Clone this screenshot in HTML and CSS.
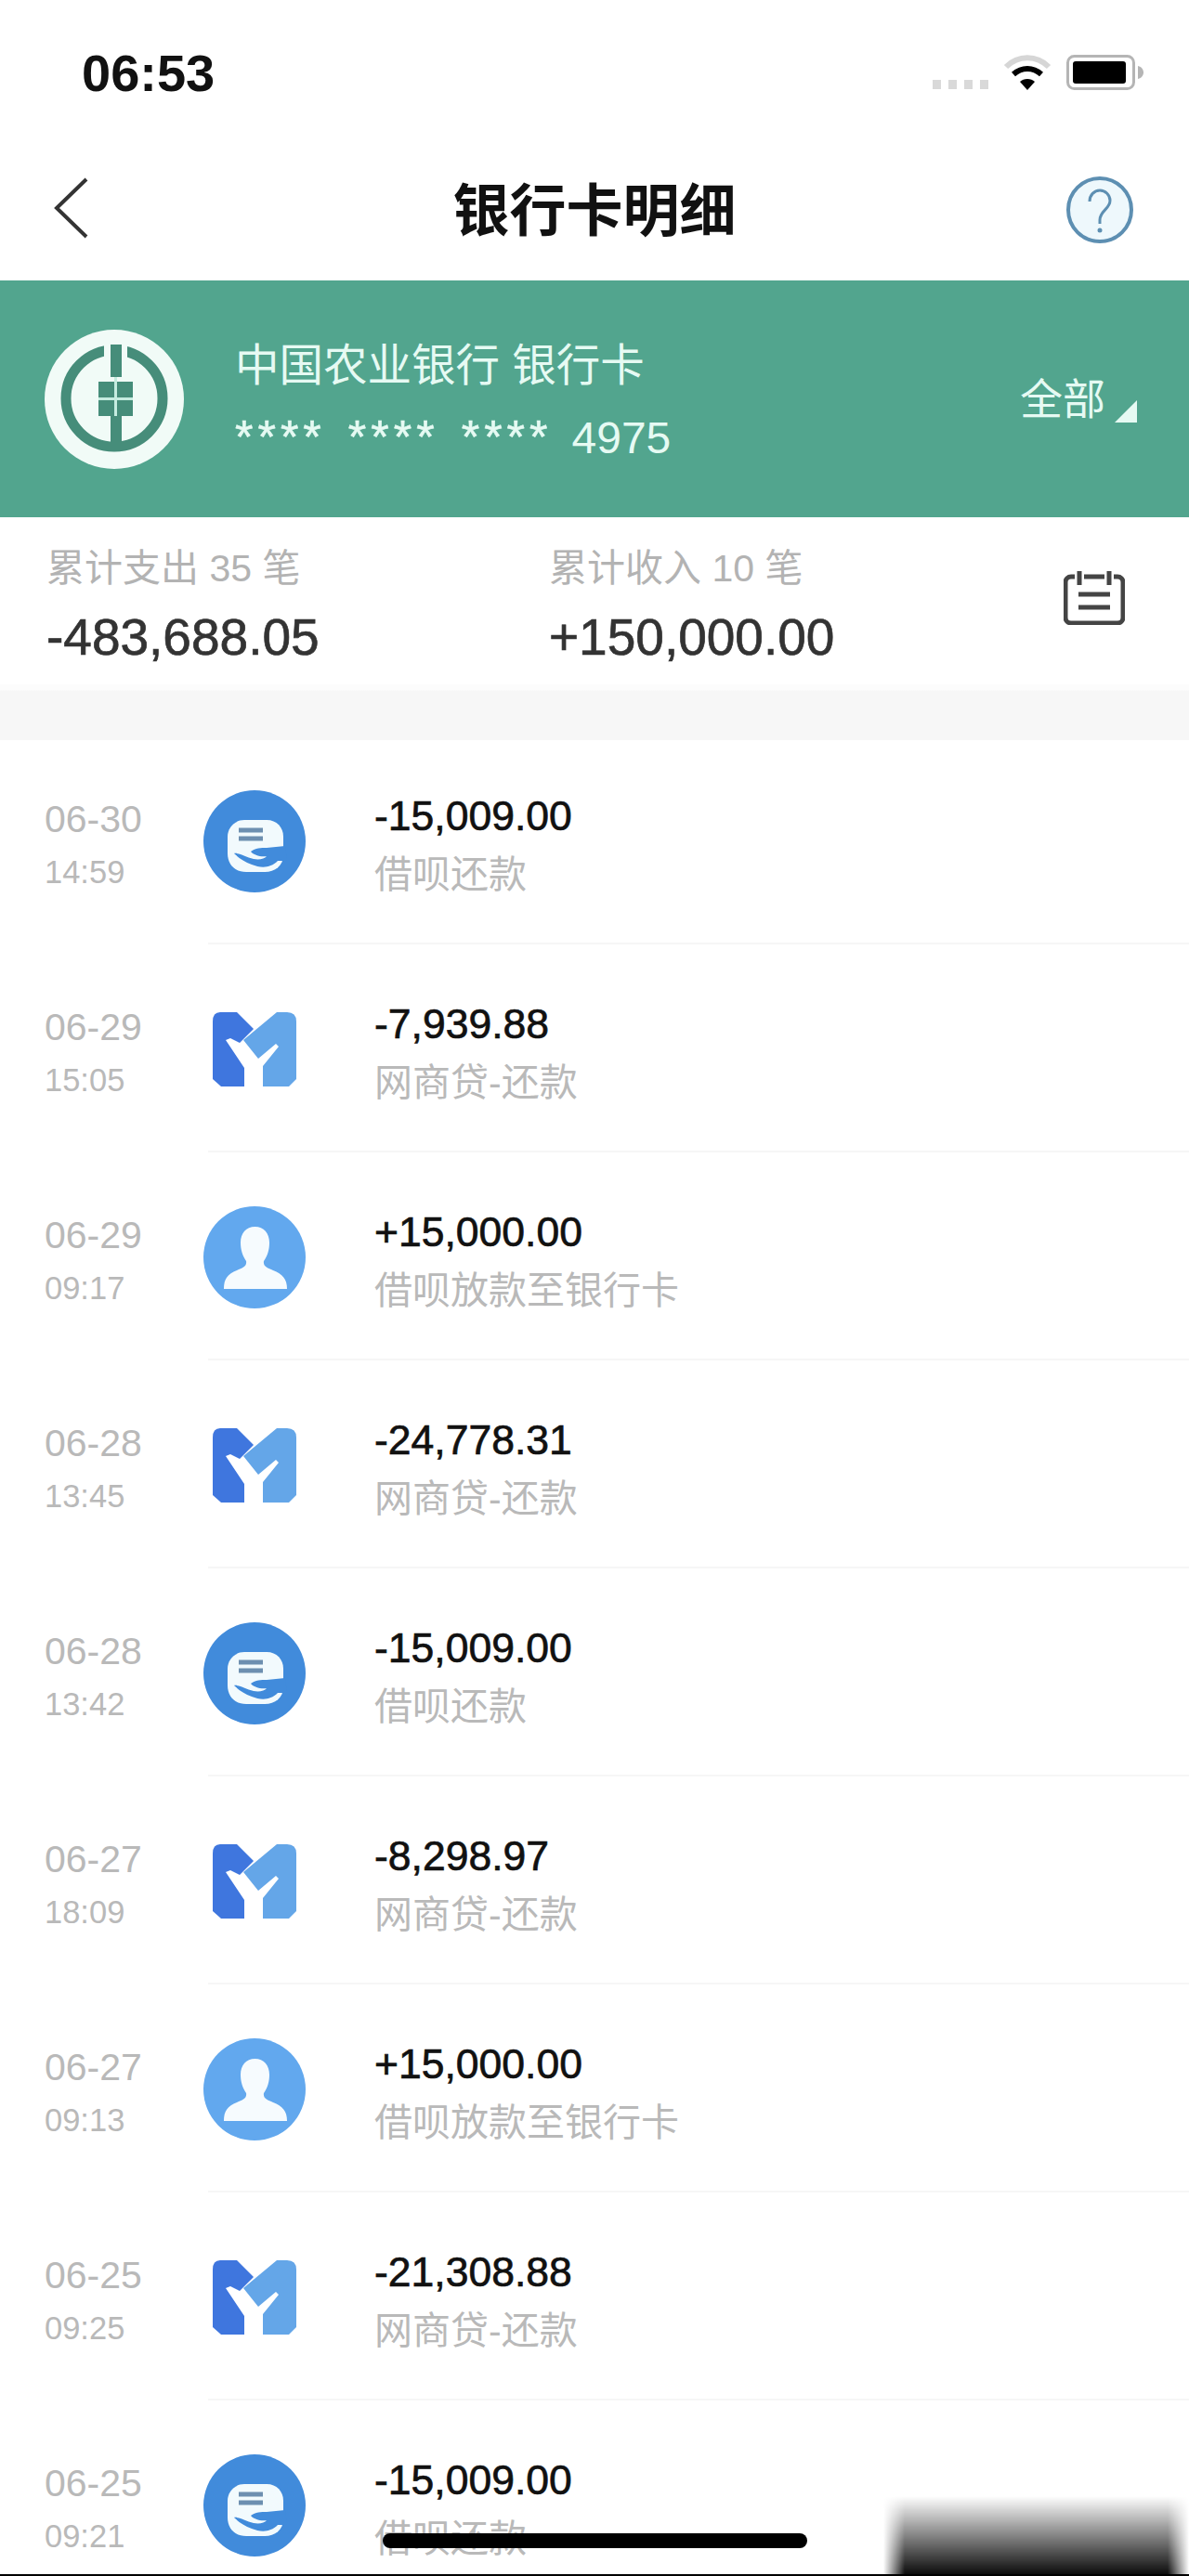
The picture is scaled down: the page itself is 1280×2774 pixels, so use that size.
FILE: index.html
```html
<!DOCTYPE html>
<html lang="zh-CN">
<head>
    <meta charset="UTF-8">
    <meta name="viewport" content="width=device-width, initial-scale=1.0">
    <title>银行卡明细</title>
    <link rel="stylesheet" href="styles.css">
</head>
<body>
    <svg class="icon-defs" width="0" height="0">
        <defs>
            <symbol id="icon-jiebei" viewBox="0 0 110 110">
                <circle cx="55" cy="55" r="55" fill="#418bdb"/>
                <path d="M44 32H68C79 32 86 40 86 50V70C86 81 77 88 66 88H46C34 88 26 80 26 68V50C26 40 34 32 44 32Z" fill="#f2fafd"/>
                <path d="M38 43h26M38 52h26" stroke="#6d8fb0" stroke-width="5" fill="none"/>
                <path d="M51 66C56 62 62 62 68 62L88 60 90 76 80 76C72 84 62 84 52 80 44 77 38 73 33 68 38 67 46 72 54 74 60 75 66 74 68 71 62 72 54 70 51 66Z" fill="#418bdb"/>
            </symbol>
            <symbol id="icon-mybank" viewBox="0 0 90 80">
                <path d="M0 10Q0 0 8 0H26L44 18 29 33 19 28 14 30 34 60V80H9L0 72Z" fill="#3f76de"/>
                <path d="M33 30 69 0H80Q90 0 90 10V72L82 80H54V58L71 37 68 34 49 50Z" fill="#64a6e8"/>
            </symbol>
            <symbol id="icon-person" viewBox="0 0 110 110">
                <circle cx="55" cy="55" r="55" fill="#62a8ee"/>
                <path d="M22 89C22 78 26 73 36 69 42 66 47 65 46 59 42 53 40 47 40 39 40 29 46 22 55.500 22 65 22 71 29 71 39 71 47 69 53 65 59 64 65 69 66 75 69 85 73 90 78 90 89Z" fill="#f6fbfe"/>
            </symbol>
        </defs>
    </svg>

    <div class="status-bar">
        <span class="clock">06:53</span>
        <div class="status-icons">
            <svg class="signal" width="60" height="10" viewBox="0 0 60 10"><path d="M0 0h9v10H0zM17 0h9v10h-9zM34 0h9v10h-9zM51 0h9v10h-9z" fill="#d9d9d9"/></svg>
            <svg class="wifi" width="52" height="38" viewBox="0 0 52 38">
                <path d="M3 13C16 0 36 0 49 13" fill="none" stroke="#d6d6d6" stroke-width="6"/>
                <path d="M11 21c9-8 21-8 30 0" fill="none" stroke="#000" stroke-width="6"/>
                <path d="M26 38 18 29c4-4 12-4 16 0z" fill="#000"/>
            </svg>
            <svg class="battery" width="84" height="38" viewBox="0 0 84 38">
                <rect x="1.500" y="1.500" width="71" height="35" rx="7" fill="none" stroke="#b5b5b5" stroke-width="3"/>
                <rect x="7" y="7" width="57" height="24" rx="3" fill="#000"/>
                <path d="M77 12c4 1 6 4 6 7s-2 6-6 7z" fill="#b5b5b5"/>
            </svg>
        </div>
    </div>

    <header class="nav">
        <svg class="nav-back" width="38" height="66" viewBox="0 0 38 66"><path d="M35 2 3 33l32 31" fill="none" stroke="#333" stroke-width="4"/></svg>
        <h1>银行卡明细</h1>
        <svg class="nav-help" width="76" height="76" viewBox="0 0 76 76">
            <circle cx="38" cy="38" r="34" fill="#eef8fc" stroke="#5d8fb2" stroke-width="4"/>
            <path d="M27 29c0-7 5-12 11-12s11 5 11 11c0 9-11 11-11 21v4" fill="none" stroke="#5d8fb2" stroke-width="3"/>
            <circle cx="38" cy="60" r="2.500" fill="#5d8fb2"/>
        </svg>
    </header>

    <section class="card">
        <svg class="card-logo" width="150" height="150" viewBox="0 0 150 150">
            <circle cx="75" cy="75" r="75" fill="#f1fbf7"/>
            <circle cx="75" cy="74" r="52" fill="none" stroke="#468d7a" stroke-width="11"/>
            <path d="M64 14h25v42H64z" fill="#f1fbf7"/>
            <path d="M71 16h12v35H71z" fill="#468d7a"/>
            <path d="M58 56h37v37H83v30H71V93H58z" fill="#468d7a"/>
            <path d="M75 51h3v42h-3zM58 73h37v3H58z" fill="#c5ece0"/>
        </svg>
        <div class="card-info">
            <div class="card-name">中国农业银行 银行卡</div>
            <div class="card-number">
                <span class="stars">****</span>
                <span class="stars">****</span>
                <span class="stars">****</span>
                <span class="last-four">4975</span>
            </div>
        </div>
        <div class="card-filter">全部<span class="corner"></span></div>
    </section>

    <section class="totals">
        <div class="total">
            <div class="total-label">累计支出 35 笔</div>
            <div class="total-value">-483,688.05</div>
        </div>
        <div class="total">
            <div class="total-label">累计收入 10 笔</div>
            <div class="total-value">+150,000.00</div>
        </div>
        <svg class="total-icon" width="66" height="58" viewBox="0 0 66 58">
            <path d="M12 6H8a6 6 0 0 0-6 6v38a6 6 0 0 0 6 6h50a6 6 0 0 0 6-6V12a6 6 0 0 0-6-6h-4M22 6h22" fill="none" stroke="#444" stroke-width="5"/>
            <path d="M17 0v15M49 0v15M16 25h34M16 39h34" fill="none" stroke="#444" stroke-width="5"/>
        </svg>
    </section>

    <div class="gap"></div>

    <ul class="list">
        <li class="row">
            <div class="when"><span class="date">06-30</span><span class="time">14:59</span></div>
            <div class="row-body">
                <svg class="badge"><use href="#icon-jiebei"/></svg>
                <div class="what"><span class="amount">-15,009.00</span><span class="desc">借呗还款</span></div>
            </div>
        </li>
        <li class="row">
            <div class="when"><span class="date">06-29</span><span class="time">15:05</span></div>
            <div class="row-body">
                <svg class="badge badge-m"><use href="#icon-mybank"/></svg>
                <div class="what"><span class="amount">-7,939.88</span><span class="desc">网商贷-还款</span></div>
            </div>
        </li>
        <li class="row">
            <div class="when"><span class="date">06-29</span><span class="time">09:17</span></div>
            <div class="row-body">
                <svg class="badge"><use href="#icon-person"/></svg>
                <div class="what"><span class="amount">+15,000.00</span><span class="desc">借呗放款至银行卡</span></div>
            </div>
        </li>
        <li class="row">
            <div class="when"><span class="date">06-28</span><span class="time">13:45</span></div>
            <div class="row-body">
                <svg class="badge badge-m"><use href="#icon-mybank"/></svg>
                <div class="what"><span class="amount">-24,778.31</span><span class="desc">网商贷-还款</span></div>
            </div>
        </li>
        <li class="row">
            <div class="when"><span class="date">06-28</span><span class="time">13:42</span></div>
            <div class="row-body">
                <svg class="badge"><use href="#icon-jiebei"/></svg>
                <div class="what"><span class="amount">-15,009.00</span><span class="desc">借呗还款</span></div>
            </div>
        </li>
        <li class="row">
            <div class="when"><span class="date">06-27</span><span class="time">18:09</span></div>
            <div class="row-body">
                <svg class="badge badge-m"><use href="#icon-mybank"/></svg>
                <div class="what"><span class="amount">-8,298.97</span><span class="desc">网商贷-还款</span></div>
            </div>
        </li>
        <li class="row">
            <div class="when"><span class="date">06-27</span><span class="time">09:13</span></div>
            <div class="row-body">
                <svg class="badge"><use href="#icon-person"/></svg>
                <div class="what"><span class="amount">+15,000.00</span><span class="desc">借呗放款至银行卡</span></div>
            </div>
        </li>
        <li class="row">
            <div class="when"><span class="date">06-25</span><span class="time">09:25</span></div>
            <div class="row-body">
                <svg class="badge badge-m"><use href="#icon-mybank"/></svg>
                <div class="what"><span class="amount">-21,308.88</span><span class="desc">网商贷-还款</span></div>
            </div>
        </li>
        <li class="row">
            <div class="when"><span class="date">06-25</span><span class="time">09:21</span></div>
            <div class="row-body">
                <svg class="badge"><use href="#icon-jiebei"/></svg>
                <div class="what"><span class="amount">-15,009.00</span><span class="desc">借呗还款</span></div>
            </div>
        </li>
    </ul>

    <div class="home-bar"></div>
    <div class="corner-shade"></div>
    <div class="bottom-line"></div>
</body>
</html>
```

FILE: styles.css
```css
* {
    box-sizing: border-box;
}
html, body {
    height: 100%;
}
body {
    margin: 0;
    position: relative;
    height: 2774px;
    overflow: hidden;
    background: #fff;
    color: #000;
    font-family: "Liberation Sans", "Noto Sans CJK SC", sans-serif;
}
.icon-defs {
    position: absolute;
}

/* status bar */
.status-bar {
    height: 160px;
    display: flex;
    align-items: flex-start;
    justify-content: space-between;
    padding: 59px 48px 0 88px;
}
.clock {
    font-size: 56px;
    line-height: 40px;
    font-weight: 700;
    color: #111;
}
.status-icons {
    display: flex;
    align-items: flex-end;
    gap: 16px;
}
.signal {
    margin-bottom: 1px;
}

/* nav */
.nav {
    height: 142px;
    display: grid;
    grid-template-columns: 1fr auto 1fr;
    align-items: center;
    padding: 0 58px 10px 58px;
}
.nav-back {
    margin-top: -4px;
}
.nav-help {
    justify-self: end;
}
.nav h1 {
    margin: 3px 0 0;
    font-size: 61px;
    line-height: 70px;
    font-weight: 700;
    color: #111;
}

/* green card */
.card {
    height: 255px;
    background: #52a58e;
    display: flex;
    align-items: center;
    padding: 0 56px 0 48px;
    color: #e6faf3;
}
.card-logo {
    flex-shrink: 0;
}
.card-info {
    margin-left: 55px;
    margin-top: 4px;
    flex: 1;
}
.card-name {
    font-size: 47.500px;
    line-height: 56px;
}
.card-number {
    display: flex;
    align-items: baseline;
    gap: 24px;
    margin-top: 24px;
}
.stars {
    font-size: 50px;
    line-height: 50px;
    letter-spacing: 5px;
    -webkit-text-stroke: 0.6px #e6faf3;
}
.last-four {
    font-size: 48px;
    line-height: 50px;
    margin-left: -3px;
}
.card-filter {
    position: relative;
    font-size: 46px;
    line-height: 50px;
    padding-right: 34px;
}
.corner {
    position: absolute;
    right: 0;
    bottom: 0;
    width: 0;
    height: 0;
    border-left: 24px solid transparent;
    border-bottom: 24px solid #e6faf3;
}

/* totals */
.totals {
    height: 180px;
    display: flex;
    align-items: flex-start;
    padding: 29px 0 0 50px;
    color: #333;
}
.total {
    width: 541px;
}
.total-label {
    font-size: 41px;
    line-height: 52px;
    color: #b3b3b3;
}
.total-value {
    font-size: 55px;
    line-height: 62px;
    margin-top: 17px;
    -webkit-text-stroke: 0.7px #333;
}
.total-icon {
    margin-top: 29px;
    margin-left: 13px;
}
.gap {
    height: 60px;
    background: linear-gradient(to bottom, #fcfcfc 6px, #f7f7f7 7px);
}

/* list */
.list {
    list-style: none;
    margin: -4px 0 0;
    padding: 0;
}
.row {
    height: 224px;
    display: flex;
}
.when {
    width: 224px;
    padding: 61px 0 0 48px;
    display: flex;
    flex-direction: column;
    color: #b9b9b9;
}
.date {
    font-size: 41px;
    line-height: 56px;
}
.time {
    font-size: 34.500px;
    line-height: 44px;
    margin-top: 7px;
}
.row-body {
    flex: 1;
    display: flex;
    align-items: center;
    border-bottom: 2px solid #f6f6f6;
}
.badge {
    width: 110px;
    height: 110px;
    margin-left: -5px;
    margin-top: 4px;
    flex-shrink: 0;
}
.badge-m {
    width: 90px;
    height: 80px;
    margin: 4px 10px 0 5px;
}
.what {
    display: flex;
    flex-direction: column;
    margin-left: 74px;
    margin-top: 12px;
}
.amount {
    font-size: 44.500px;
    line-height: 52px;
    color: #111;
    -webkit-text-stroke: 0.7px #111;
}
.desc {
    font-size: 41px;
    line-height: 50px;
    margin-top: 12px;
    color: #b9b9b9;
}

/* overlays on the bottom edge */
.home-bar {
    position: absolute;
    left: 412px;
    top: 2728px;
    width: 457px;
    height: 16px;
    border-radius: 8px;
    background: #000;
}
.corner-shade {
    position: absolute;
    left: 951px;
    top: 2688px;
    width: 329px;
    height: 84px;
    background: linear-gradient(to bottom, rgba(0, 0, 0, 0), rgba(0, 0, 0, 0.95));
    -webkit-mask-image: linear-gradient(to right, transparent, #000 7%, #000 93%, transparent);
}
.bottom-line {
    position: absolute;
    left: 0;
    top: 2772px;
    width: 100%;
    height: 2px;
    background: #000;
}
```
